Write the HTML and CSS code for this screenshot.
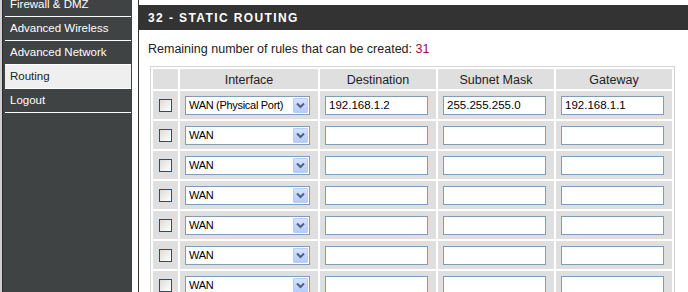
FILE: index.html
```html
<!DOCTYPE html>
<html lang="en">
<head>
  <meta charset="UTF-8">
  <title>Static Routing</title>
  <link rel="stylesheet" href="styles.css">
</head>
<body>
  <div class="edge"></div>
  <ul class="sidebar">
    <li><a href="#">Firewall &amp; DMZ</a></li>
    <li><a href="#">Advanced Wireless</a></li>
    <li><a href="#">Advanced Network</a></li>
    <li class="active"><a href="#">Routing</a></li>
    <li><a href="#">Logout</a></li>
  </ul>
  <div class="content">
    <h2 class="title">32 - STATIC ROUTING</h2>
    <p class="remaining">Remaining number of rules that can be created: <span class="count">31</span></p>
    <table class="routes">
      <thead>
        <tr>
          <th class="col-check"></th>
          <th class="col-iface">Interface</th>
          <th class="col-addr">Destination</th>
          <th class="col-addr">Subnet Mask</th>
          <th class="col-addr">Gateway</th>
        </tr>
      </thead>
      <tbody>
        <tr>
          <td class="col-check"><input type="checkbox"></td>
          <td><div class="select"><select><option>WAN (Physical Port)</option></select><span class="drop"><svg width="9" height="7" viewBox="0 0 9 7"><path d="M1 1.5 L4.5 5 L8 1.5" fill="none" stroke="#4d6185" stroke-width="2"/></svg></span></div></td>
          <td><input type="text" value="192.168.1.2"></td>
          <td><input type="text" value="255.255.255.0"></td>
          <td><input type="text" value="192.168.1.1"></td>
        </tr>
        <tr>
          <td class="col-check"><input type="checkbox"></td>
          <td><div class="select"><select><option>WAN</option></select><span class="drop"><svg width="9" height="7" viewBox="0 0 9 7"><path d="M1 1.5 L4.5 5 L8 1.5" fill="none" stroke="#4d6185" stroke-width="2"/></svg></span></div></td>
          <td><input type="text"></td>
          <td><input type="text"></td>
          <td><input type="text"></td>
        </tr>
        <tr>
          <td class="col-check"><input type="checkbox"></td>
          <td><div class="select"><select><option>WAN</option></select><span class="drop"><svg width="9" height="7" viewBox="0 0 9 7"><path d="M1 1.5 L4.5 5 L8 1.5" fill="none" stroke="#4d6185" stroke-width="2"/></svg></span></div></td>
          <td><input type="text"></td>
          <td><input type="text"></td>
          <td><input type="text"></td>
        </tr>
        <tr>
          <td class="col-check"><input type="checkbox"></td>
          <td><div class="select"><select><option>WAN</option></select><span class="drop"><svg width="9" height="7" viewBox="0 0 9 7"><path d="M1 1.5 L4.5 5 L8 1.5" fill="none" stroke="#4d6185" stroke-width="2"/></svg></span></div></td>
          <td><input type="text"></td>
          <td><input type="text"></td>
          <td><input type="text"></td>
        </tr>
        <tr>
          <td class="col-check"><input type="checkbox"></td>
          <td><div class="select"><select><option>WAN</option></select><span class="drop"><svg width="9" height="7" viewBox="0 0 9 7"><path d="M1 1.5 L4.5 5 L8 1.5" fill="none" stroke="#4d6185" stroke-width="2"/></svg></span></div></td>
          <td><input type="text"></td>
          <td><input type="text"></td>
          <td><input type="text"></td>
        </tr>
        <tr>
          <td class="col-check"><input type="checkbox"></td>
          <td><div class="select"><select><option>WAN</option></select><span class="drop"><svg width="9" height="7" viewBox="0 0 9 7"><path d="M1 1.5 L4.5 5 L8 1.5" fill="none" stroke="#4d6185" stroke-width="2"/></svg></span></div></td>
          <td><input type="text"></td>
          <td><input type="text"></td>
          <td><input type="text"></td>
        </tr>
        <tr>
          <td class="col-check"><input type="checkbox"></td>
          <td><div class="select"><select><option>WAN</option></select><span class="drop"><svg width="9" height="7" viewBox="0 0 9 7"><path d="M1 1.5 L4.5 5 L8 1.5" fill="none" stroke="#4d6185" stroke-width="2"/></svg></span></div></td>
          <td><input type="text"></td>
          <td><input type="text"></td>
          <td><input type="text"></td>
        </tr>
      </tbody>
    </table>
  </div>
</body>
</html>
```

FILE: styles.css
```css
/* Stary panel routera, czcionka podobna do Tahomy */
body {
  margin: 0;
  font-family: "Liberation Sans", Arial, sans-serif;
  font-size: 11px;
  color: #222;
  background: #fff;
  display: flex;
  align-items: stretch;
  height: 292px;
  overflow: hidden;
}
.edge {
  width: 2px;
  background: #cfcfcf;
  border-right: 1px solid #2a2a2a;
  flex: none;
}
.sidebar {
  list-style: none;
  margin: 0;
  padding: 0 1px 0 2px;
  width: 126px;
  flex: none;
  background: #404344;
}
.sidebar li {
  height: 23px;
  line-height: 23px;
  border-bottom: 1px solid #fff;
}
.sidebar li:first-child {
  margin-top: -7px;
}
.sidebar a {
  display: block;
  padding-left: 5px;
  color: #fff;
  text-decoration: none;
  font-size: 11.5px;
}
.sidebar .active {
  background: #efefef;
}
.sidebar .active a {
  color: #222;
}
.content {
  margin-left: 6px;
  flex: 1;
  border-left: 1px solid #333;
  padding-top: 5px;
}
.title {
  margin: 0;
  height: 25px;
  line-height: 26px;
  background: #333;
  color: #fff;
  font-size: 12px;
  font-weight: bold;
  letter-spacing: 1.4px;
  padding-left: 9px;
}
.remaining {
  margin: 12px 0 0 9px;
  font-size: 12.5px;
  line-height: 14px;
}
.count {
  color: #a0102e;
}
.routes {
  margin: 10px 0 0 11px;
  border: 1px solid #d4d4d4;
  border-spacing: 2px;
  background: #fff;
}
.routes th,
.routes td {
  box-sizing: border-box;
  background: #dfdfdf;
}
.routes th {
  height: 20px;
  padding: 2px 0 0;
  font-weight: normal;
  font-size: 12.5px;
  color: #222;
}
.routes td {
  height: 28px;
  padding: 0 0 0 5px;
  vertical-align: middle;
}
.routes .col-check {
  width: 25px;
  padding: 0;
  text-align: center;
}
.routes .col-iface {
  width: 138px;
}
.routes .col-addr {
  width: 116px;
}
input[type="checkbox"] {
  appearance: none;
  margin: 3px 0 0 -1px;
  width: 13px;
  height: 13px;
  border: 1px solid #1c5180;
  background: linear-gradient(to bottom right, #dcdcd7, #fff);
}
input[type="text"] {
  box-sizing: border-box;
  width: 103px;
  height: 19px;
  margin: 0;
  border: 1px solid #7f9db9;
  padding: 0 3px;
  font-family: "Liberation Sans", Arial, sans-serif;
  font-size: 11.5px;
  color: #000;
  display: block;
}
.select {
  position: relative;
  width: 125px;
  height: 19px;
  box-sizing: border-box;
}
.select select {
  appearance: none;
  box-sizing: border-box;
  width: 100%;
  height: 19px;
  margin: 0;
  border: 1px solid #7f9db9;
  border-radius: 0;
  padding: 0 3px;
  background: #fff;
  font-family: "Liberation Sans", Arial, sans-serif;
  font-size: 11px;
  letter-spacing: -0.3px;
  color: #000;
  display: block;
}
/* przycisk rozwijania w stylu XP */
.select .drop {
  position: absolute;
  right: 2px;
  top: 2px;
  width: 15px;
  height: 15px;
  box-sizing: border-box;
  border: 1px solid #b8cdf6;
  border-radius: 1px;
  background: linear-gradient(#d6e3fd, #b6cbf7);
  display: flex;
  align-items: center;
  justify-content: center;
  pointer-events: none;
}
```
